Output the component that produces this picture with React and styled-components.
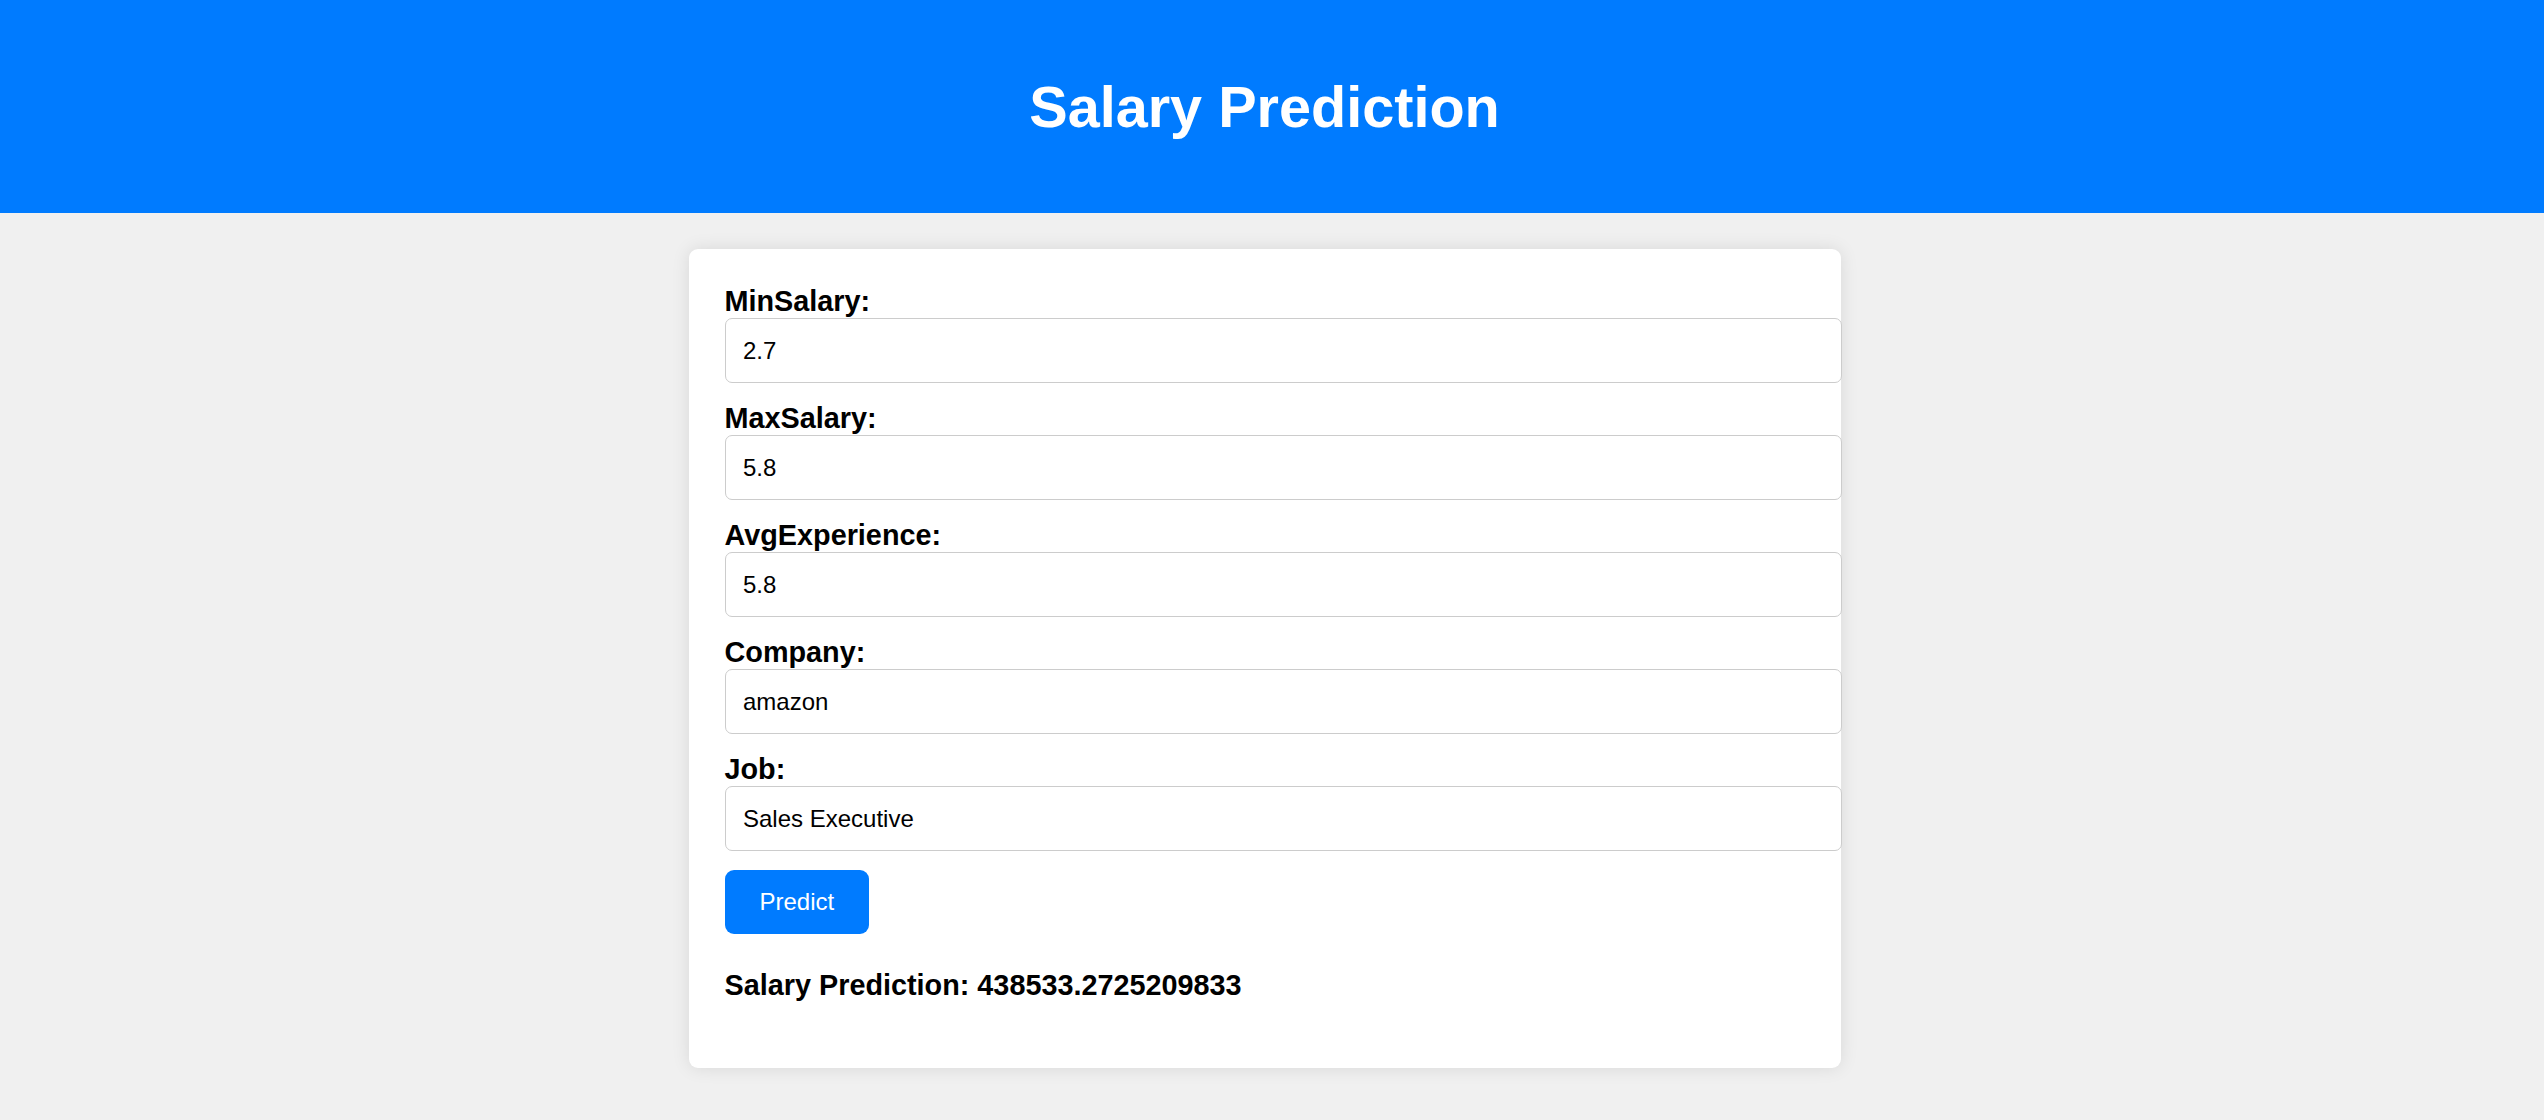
import React, { useState } from 'react';
import styled, { createGlobalStyle } from 'styled-components';

const GlobalStyle = createGlobalStyle`
  html, body {
    margin: 0;
    padding: 0;
    background: #f0f0f0;
    font-family: "Liberation Sans", Arial, sans-serif;
  }
`;

const Header = styled.header`
  background: #007bff;
  color: white;
  padding: 73.5px 15px 73.5px 0;
  text-align: center;
`;

const Title = styled.h1`
  margin: 0;
  font-size: 57.6px;
  font-weight: 700;
`;

const Main = styled.main`
  display: flex;
  justify-content: center;
  padding: 36px 15px 52px 0;
`;

const Card = styled.div`
  background: white;
  width: 1080px;
  padding: 36px;
  border-radius: 9px;
  box-shadow: 0 0 18px rgba(0, 0, 0, 0.1);
`;

const Field = styled.div`
  margin-bottom: 19px;
`;

const Label = styled.label`
  display: block;
  font-size: 28.8px;
  font-weight: 700;
  color: #000;
`;

const Input = styled.input`
  display: block;
  width: 100%;
  margin: 0;
  padding: 17.5px 17.5px;
  border: 1px solid #ccc;
  border-radius: 7px;
  font-family: "Liberation Sans", Arial, sans-serif;
  font-size: 24px;
  color: #000;
  outline: none;
`;

const PredictButton = styled.button`
  background: #007bff;
  color: white;
  border: none;
  border-radius: 9px;
  padding: 18px 35px;
  font-family: "Liberation Sans", Arial, sans-serif;
  font-size: 24px;
  cursor: pointer;
`;

const Result = styled.h3`
  margin: 35px 0 30px;
  font-size: 28.8px;
  font-weight: 700;
  color: #000;
`;

const fields = [
  ['MinSalary', '2.7'],
  ['MaxSalary', '5.8'],
  ['AvgExperience', '5.8'],
  ['Company', 'amazon'],
  ['Job', 'Sales Executive'],
];

export default function App() {
  const [values, setValues] = useState(fields.map((f) => f[1]));

  return (
    <>
      <GlobalStyle />
      <Header>
        <Title>Salary Prediction</Title>
      </Header>
      <Main>
        <Card>
          {fields.map(([name], i) => (
            <Field key={name}>
              <Label>{name}:</Label>
              <Input
                value={values[i]}
                onChange={(e) => {
                  const next = [...values];
                  next[i] = e.target.value;
                  setValues(next);
                }}
              />
            </Field>
          ))}
          <PredictButton>Predict</PredictButton>
          <Result>Salary Prediction: 438533.2725209833</Result>
        </Card>
      </Main>
    </>
  );
}
